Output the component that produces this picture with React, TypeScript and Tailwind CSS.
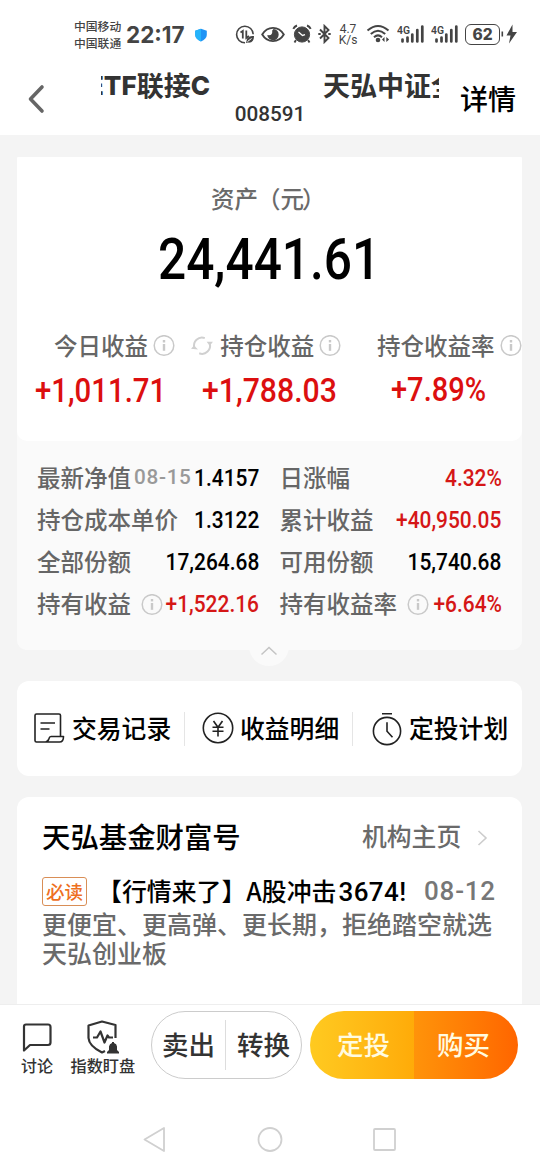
import React from "react";

const cjk = "font-['Noto_Sans_CJK_SC',sans-serif]";
const num = "inline-block whitespace-nowrap font-['Roboto',sans-serif] font-medium";

function Info({ className = "" }: { className?: string }) {
  return (
    <svg className={`h-[22px] w-[22px] shrink-0 ${className}`} viewBox="0 0 22 22" fill="none" stroke="#c9c9c9">
      <circle cx="11" cy="10.5" r="9.8" strokeWidth="1.5" />
      <path d="M11 9v6.8" strokeWidth="2.4" />
      <path d="M11 5v2.4" strokeWidth="2.4" />
    </svg>
  );
}

function Refresh() {
  return (
    <svg className="h-[22px] w-[22px] shrink-0" viewBox="0 0 22 22" fill="none" stroke="#d0d0d0" strokeWidth="2">
      <path d="M3.4 13a8 8 0 0 1 10.4-9.9" />
      <path d="M18.6 8.3A8 8 0 0 1 8.2 18.3" />
      <path d="M0 13.8l3-3.4 4 4.2z M22 6.8l-3.2 4-3.2-4z" fill="#d0d0d0" stroke="none" />
    </svg>
  );
}

function Signal() {
  return (
    <svg className="h-[20px] w-[28px]" viewBox="0 0 28 20">
      <text x="0" y="9" fontSize="11" fontWeight="600" fontFamily="Roboto, sans-serif" fill="#444" textLength="13" lengthAdjust="spacingAndGlyphs">4G</text>
      <g stroke="#444" strokeWidth="2.7" strokeLinecap="round">
        <path d="M5.5 14.5v2M10.5 12.5v4M15.3 9.5v7M20.3 5v11.5M25.3 1.5v15" />
      </g>
    </svg>
  );
}

function StatusBar() {
  return (
    <div className="flex h-[68px] shrink-0 items-start pt-[17px] text-[#444]">
      <div className="ml-[74px] w-[50px] whitespace-nowrap text-[11.8px] font-medium leading-[17px]">
        <div>中国移动</div>
        <div>中国联通</div>
      </div>
      <div className="ml-[2px] mt-[3px] w-[68px] whitespace-nowrap font-['Inter',sans-serif] text-[22.5px] font-bold leading-[30px]">22:17</div>
      <svg className="mt-[11px] h-[14px] w-[14px]" viewBox="0 0 14 14">
        <path d="M7 .8L12.8 2.8V7c0 3-2.5 5-5.8 6.4C3.7 12 1.2 10 1.2 7V2.8z" fill="#1f93f5" />
        <path d="M7 .8L1.2 2.8V7c0 3 2.5 5 5.8 6.4z" fill="#25b4fb" />
      </svg>
      <svg className="ml-[27px] mt-[8px] h-[20px] w-[20px]" viewBox="0 0 20 20" fill="none" stroke="#444" strokeWidth="1.6">
        <path d="M18.2 9.3A8.3 8.3 0 1 0 10 17.8" />
        <path d="M5.5 7.5L7.8 6v7.5M11.3 5.5v7.5l2.7-2" strokeWidth="1.8" />
        <path d="M19 11c-5 0-7.5 2-7.4 5l-.8 2 2-.4c4.5 .6 6.2-2.5 6.2-6.6z" fill="#444" stroke="none" />
        <path d="M12.5 16.5l4-3" stroke="#fff" strokeWidth="1" />
      </svg>
      <svg className="ml-[6px] mt-[8px] h-[20px] w-[24px]" viewBox="0 0 24 20">
        <path d="M1.2 9.5C6.5 .7 17.5 .7 22.8 9.5 17.5 18.3 6.5 18.3 1.2 9.5z" fill="none" stroke="#444" strokeWidth="1.9" />
        <path d="M12.5 3.9A5.7 5.7 0 1 1 6.3 10l1.7 .3Q11.8 10 11.2 5.5z" fill="#444" />
      </svg>
      <svg className="ml-[7px] mt-[7px] h-[20px] w-[20px]" viewBox="0 0 20 20" fill="none" stroke="#444">
        <circle cx="10" cy="10.5" r="7.6" fill="#444" />
        <path d="M1.3 4.8Q2.3 2.5 5 1.5M18.7 4.8Q17.7 2.5 15 1.5M4 16l-1.5 2.5M16 16l1.5 2.5" strokeWidth="1.9" />
        <path d="M6.5 8l4 3.4 2.5-.8" stroke="#fff" strokeWidth="1.3" />
      </svg>
      <svg className="ml-[6px] mt-[7px] h-[20px] w-[14px]" viewBox="0 0 14 20" fill="none" stroke="#444" strokeWidth="1.9">
        <path d="M2 5.5l8.500 8.500-4 4V2l4 4L2 14.500" />
        <path d="M.3 10h2.400M10.300 10h2.400" strokeWidth="2.200" />
      </svg>
      <div className="ml-[5px] mt-[7px] w-[22px] text-center font-['Roboto',sans-serif] text-[12px] leading-[11px]">
        <div>4.7</div>
        <div>K/s</div>
      </div>
      <svg className="ml-[7px] mt-[7px] h-[20px] w-[25px]" viewBox="0 0 25 20" fill="none" stroke="#444" strokeWidth="2">
        <path d="M1.5 6.5Q12 -2.5 22.5 6.5M4.8 10Q12 3.5 19.2 10M8 13.2Q12 9.6 16 13.2" />
        <circle cx="12" cy="16" r="2.3" fill="#444" stroke="none" />
        <path d="M18.5 13v5l-2.5-2.5zM20.3 13v5l2.8-2.5z" fill="#444" stroke="none" />
      </svg>
      <div className="ml-[6px] mt-[8px] flex gap-[6px]">
        <Signal />
        <Signal />
      </div>
      <div className="ml-[6px] mt-[7px] flex h-[21px] w-[35px] items-center justify-center rounded-[6px] border-[1.5px] border-[#444] font-['Inter',sans-serif] text-[15.5px] font-extrabold">62</div>
      <svg className="mt-[7px] h-[20px] w-[18px]" viewBox="0 0 18 20" fill="#444">
        <path d="M1.5 7.5h1.6v5H1.5zM12.5 .5L6.5 11.5h4L9 19.5l8-11.5h-4.5z" />
      </svg>
    </div>
  );
}

function Header() {
  return (
    <div className="flex h-[67px] shrink-0 text-[#333]">
      <svg className="ml-[26px] mt-[16px] h-[30px] w-[20px]" viewBox="0 0 20 30" fill="none" stroke="#666" strokeWidth="3.6" strokeLinecap="round" strokeLinejoin="round">
        <path d="M16 3L4.5 15l11.5 12" />
      </svg>
      <div className="ml-[55px] w-[338px]">
        <div className="flex h-[35px] overflow-hidden whitespace-nowrap text-[27px] font-bold leading-[34px]">
          <span className="flex w-[109px] shrink-0 justify-end">
            <span className="font-['Inter',sans-serif] text-[26px] font-extrabold leading-[36px]">ETF</span>
            <span>联接</span>
            <span className="font-['Inter',sans-serif] text-[26px] font-extrabold leading-[36px]">C</span>
          </span>
          <span className="ml-[113px]">天弘中证全指</span>
        </div>
        <div className="text-center font-['Roboto',sans-serif] text-[20.7px] font-medium leading-[22px]">008591</div>
      </div>
      <div className="ml-[21px] mt-[10px] whitespace-nowrap text-[28px] font-medium leading-[40px] text-black">详情</div>
    </div>
  );
}

function Summary() {
  return (
    <section className="h-[284px] overflow-hidden rounded-b-[10px] rounded-t-[2px] bg-white">
      <div className="h-[66px] pl-[194px] pt-[23px] text-[23.5px] font-medium leading-[36px] text-[#6a6a6a]">
        资产<span className="-ml-px">（元</span><span className="-ml-[2px]">）</span>
      </div>
      <div className="h-[72px] pl-[141px] leading-[72px] text-black">
        <span className={`${num} origin-left scale-x-[0.855] text-[58px]`}>24,441.61</span>
      </div>
      <div className="mt-[33px] flex h-[36px] items-center whitespace-nowrap text-[23.5px] font-medium text-[#666]">
        <span className="ml-[37px] w-[101px]">今日收益</span>
        <Info />
        <span className="w-[17px]" />
        <Refresh />
        <span className="ml-[7px] w-[101px]">持仓收益</span>
        <Info />
        <span className="ml-[36px] w-[123px] shrink-0">持仓收益率</span>
        <Info />
      </div>
      <div className="mt-[5px] flex h-[42px] items-center text-[33px] text-[#dc0f0f]">
        <span className="ml-[18px] w-[167px]"><span className={`${num} origin-left scale-x-[0.89]`}>+1,011.71</span></span>
        <span className="w-[189px]"><span className={`${num} origin-left scale-x-[0.915]`}>+1,788.03</span></span>
        <span className={`${num} origin-left scale-x-[0.88]`}>+7.89%</span>
      </div>
    </section>
  );
}

type Cell = { label: string; value: string; red?: boolean; info?: boolean; date?: string };

const rows: [Cell, Cell][] = [
  [{ label: "最新净值", value: "1.4157", date: "08-15" }, { label: "日涨幅", value: "4.32%", red: true }],
  [{ label: "持仓成本单价", value: "1.3122" }, { label: "累计收益", value: "+40,950.05", red: true }],
  [{ label: "全部份额", value: "17,264.68" }, { label: "可用份额", value: "15,740.68" }],
  [
    { label: "持有收益", value: "+1,522.16", red: true, info: true },
    { label: "持有收益率", value: "+6.64%", red: true, info: true },
  ],
];

function DetailCell({ cell }: { cell: Cell }) {
  return (
    <div className="flex h-[42px] items-center whitespace-nowrap">
      <span className="text-[23.5px] font-medium text-[#666]">{cell.label}</span>
      {cell.date && <span className={`${num} ml-[3px] text-[20.7px] tracking-[0.7px] text-[#999]`}>{cell.date}</span>}
      {cell.info && <Info className="ml-[10px] mt-px" />}
      <span className="mt-[2px] flex w-0 grow justify-end">
        <span className={`${num} origin-right scale-x-[0.89] text-[23.5px] ${cell.red ? "text-[#d51616]" : "text-black"}`}>{cell.value}</span>
      </span>
    </div>
  );
}

function Details() {
  return (
    <section className="relative h-[209px] rounded-b-[10px] bg-[#fafafa] pt-[16px]">
      {rows.map((r, i) => (
        <div key={i} className="grid grid-cols-[222px_222px] gap-x-[20.5px] pl-[20px]">
          <DetailCell cell={r[0]} />
          <DetailCell cell={r[1]} />
        </div>
      ))}
      <div className="absolute -bottom-[16px] left-[232px] flex h-[40px] w-[40px] items-center justify-center rounded-full bg-[#fafafa]">
        <svg className="mt-[9px] h-[10px] w-[18px]" viewBox="0 0 18 10" fill="none" stroke="#c4c4c4" strokeWidth="1.5">
          <path d="M1.5 8.5L9 1.5l7.5 7" />
        </svg>
      </div>
    </section>
  );
}

function Actions() {
  return (
    <section className="mt-[31px] flex h-[95px] shrink-0 items-center whitespace-nowrap rounded-[12px] bg-white text-[24.8px] font-medium text-black">
      <svg className="-mt-[2px] ml-[16px] h-[32px] w-[32px]" viewBox="0 0 32 32" fill="none" stroke="#222" strokeWidth="1.6" strokeLinejoin="round">
        <path d="M27.5 24V3.5Q27.5 2 26 2H3.500Q2 2 2 3.500V28.500Q2 30 3.500 30H26.500Q30.500 30 30.500 24.500H18Q16.500 24.500 16 26.500Q15 30 12.500 30" />
        <path d="M7.500 11h14.500M7.500 17h9" />
      </svg>
      <span className="-mt-[2px] ml-[7px] w-[112px]">交易记录</span>
      <span className="h-[34px] w-px bg-[#e5e5e5]" />
      <svg className="-mt-px ml-[17px] h-[32px] w-[32px]" viewBox="0 0 32 32" fill="none" stroke="#222" strokeWidth="1.6">
        <circle cx="16" cy="16" r="14.7" />
        <path d="M11.5 9l4.500 6.300 4.500-6.300M16 15v9.500M10.500 15.300h11M10.500 19.300h11" />
      </svg>
      <span className="-mt-[2px] ml-[6px] w-[112px]">收益明细</span>
      <span className="h-[34px] w-px bg-[#e5e5e5]" />
      <svg className="ml-[18px] h-[34px] w-[32px]" viewBox="0 0 32 34" fill="none" stroke="#222" strokeWidth="1.6">
        <circle cx="16" cy="19" r="13.6" />
        <path d="M11 1.800h10M16 10.300v9l5.500 6" />
      </svg>
      <span className="-mt-[2px] ml-[6px]">定投计划</span>
    </section>
  );
}

function Article() {
  return (
    <section className="mt-[21px] h-[207px] shrink-0 whitespace-nowrap rounded-t-[12px] bg-white pl-[25px]">
      <div className="flex h-[78px] items-center text-[24.8px]">
        <span className="w-[320px] text-[28.4px] font-medium text-black">天弘基金财富号</span>
        <span className="w-[115px] font-medium text-[#6a6a6a]">机构主页</span>
        <svg className="mt-[3px] h-[18px] w-[12px]" viewBox="0 0 12 18" fill="none" stroke="#ccc" strokeWidth="1.6">
          <path d="M1.5 2l7.500 7L1.500 16" />
        </svg>
      </div>
      <div className="flex h-[33px] items-center">
        <span className="flex h-[29px] w-[45px] items-center justify-center rounded-[3px] border border-[#d98e56] text-[18.5px] font-medium leading-none text-[#ee701f]">必读</span>
        <span className="ml-[10px] w-[327px] text-[24.9px] font-medium text-black">
          【行情来了】A股冲击<span className="ml-[2px] font-['Roboto',sans-serif] text-[26px] tracking-[0.4px]">3674!</span>
        </span>
        <span className="font-['Roboto',sans-serif] text-[26px] font-medium tracking-[0.8px] text-[#777]">08-12</span>
      </div>
      <p className="mt-px text-[25px] font-medium leading-[29px] text-[#6a6a6a]">
        更便宜、更高弹、更长期，拒绝踏空就选
        <br />
        天弘创业板
      </p>
    </section>
  );
}

function BottomBar() {
  return (
    <footer className="flex h-[90px] shrink-0 whitespace-nowrap border-t border-[#eee] bg-white text-[#333]">
      <div className="ml-[21px] w-[34px] pt-[17px] text-[16px] font-medium leading-[22px]">
        <svg className="ml-px h-[32px] w-[32px]" viewBox="0 0 32 32" fill="none" stroke="#333" strokeWidth="2.2" strokeLinejoin="round">
          <path d="M2 28.5V4.500Q2 2.500 4 2.500H26Q28.500 2.500 28.500 5V20.500Q28.500 23 26 23H8z" />
        </svg>
        讨论
      </div>
      <div className="ml-[15.5px] w-[66px] pt-[15px] text-[16.2px] font-medium leading-[22px]">
        <svg className="ml-[16px] h-[34px] w-[34px]" viewBox="0 0 34 34" fill="none" stroke="#333" strokeWidth="2.2" strokeLinejoin="round">
          <path d="M28.500 18V5L15 1.500 1.500 5.500V18Q2 26 15 32.500L18 31" />
          <path d="M6 17.500h4l3.500-6 4 11 3-7 1.500 2h4" />
          <path d="M20 33.500v-1.500l2-2v-3.500q.5-3 3-3.500v-1h2v1q2.800 .7 3 3.500v3.500l2 2v1.500z" fill="#333" stroke="none" />
        </svg>
        指数盯盘
      </div>
      <div className="ml-[14.5px] mt-[6px] flex h-[68px] w-[151px] items-center rounded-full border border-[#ccc] text-[26.5px] font-medium">
        <span className="-mt-[2px] ml-[10px] w-[63px]">卖出</span>
        <span className="h-[50px] w-px bg-[#ddd]" />
        <span className="-mt-[2px] ml-[11px]">转换</span>
      </div>
      <div className="ml-[8px] mt-[6px] flex h-[68px] w-[208px] overflow-hidden rounded-full text-[26.5px] font-medium text-[#fffbe0]">
        <span className="flex w-[104px] items-center bg-linear-to-r from-[#ffca20] to-[#ffab08] pb-[2px] pl-[27px]">定投</span>
        <span className="flex w-[104px] items-center bg-linear-to-r from-[#ff930a] to-[#ff6500] pb-[2px] pl-[23px]">购买</span>
      </div>
    </footer>
  );
}

function NavBar() {
  return (
    <div className="flex h-[76px] shrink-0 items-start bg-white pt-[32px]">
      <svg className="ml-[142px] h-[26px] w-[26px]" viewBox="0 0 26 26" fill="none" stroke="#d0d0d0" strokeWidth="1.8" strokeLinejoin="round">
        <path d="M22 2v23L2.5 13.5z" />
      </svg>
      <svg className="ml-[89px] h-[26px] w-[26px]" viewBox="0 0 26 26" fill="none" stroke="#d0d0d0" strokeWidth="1.8">
        <circle cx="13" cy="13.5" r="11.5" />
      </svg>
      <svg className="ml-[89px] h-[26px] w-[26px]" viewBox="0 0 26 26" fill="none" stroke="#d0d0d0" strokeWidth="1.8">
        <rect x="2" y="3" width="21" height="21" rx="1" />
      </svg>
    </div>
  );
}

export default function App() {
  return (
    <div className={`flex h-[1170px] w-[540px] flex-col overflow-hidden bg-white ${cjk}`}>
      <StatusBar />
      <Header />
      <main className="flex h-[869px] shrink-0 flex-col overflow-hidden bg-[#f4f4f4] pl-[17px] pr-[18px] pt-[22px]">
        <div className="rounded-b-[10px] bg-[#fafafa]">
          <Summary />
          <Details />
        </div>
        <Actions />
        <Article />
      </main>
      <BottomBar />
      <NavBar />
    </div>
  );
}
